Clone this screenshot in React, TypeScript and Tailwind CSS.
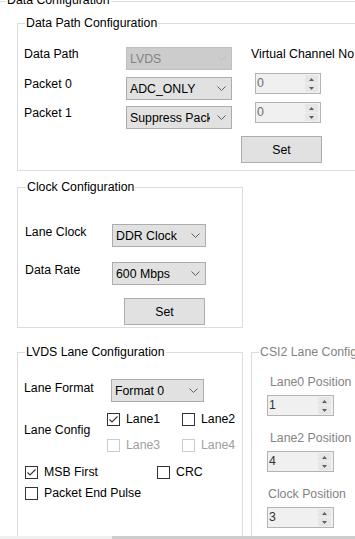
import React from 'react';

const Chevron: React.FC<{ disabled?: boolean }> = ({ disabled }) => (
  <svg width="9" height="5" viewBox="0 0 9 5" className="shrink-0">
    <polyline
      points="0.5,0.5 4.5,4.5 8.5,0.5"
      fill="none"
      stroke={disabled ? '#bdbdbd' : '#606060'}
      strokeWidth="1"
    />
  </svg>
);

const Select: React.FC<{ value: string; className?: string; disabled?: boolean }> = ({
  value,
  className = '',
  disabled,
}) => (
  <div
    className={`flex h-[23px] items-center border pl-[3px] pr-[5px] ${
      disabled ? 'border-[#bfbfbf] bg-[#cccccc] text-[#838383]' : 'border-[#adadad] bg-[#e1e1e1]'
    } ${className}`}
  >
    <span className="mr-[7px] min-w-0 flex-1 overflow-hidden whitespace-nowrap">{value}</span>
    <Chevron disabled={disabled} />
  </div>
);

const SpinBox: React.FC<{ value: string; className?: string; textClass?: string }> = ({
  value,
  className = '',
  textClass = 'text-[#6d6d6d]',
}) => (
  <div className={`flex h-[21px] items-stretch border border-[#b4b4b4] bg-[#f0f0f0] ${className}`}>
    <span className={`flex-1 pl-[1px] pt-[2px] ${textClass}`}>{value}</span>
    <div className="my-[1px] mr-[2px] flex w-[13px] flex-col gap-[1px]">
      <div className="flex flex-1 items-center justify-center bg-[#e6e6e6]">
        <svg width="5" height="3" viewBox="0 0 5 3">
          <polygon points="2.5,0 5,3 0,3" fill="#606060" />
        </svg>
      </div>
      <div className="flex flex-1 items-center justify-center bg-[#e6e6e6]">
        <svg width="5" height="3" viewBox="0 0 5 3">
          <polygon points="0,0 5,0 2.5,3" fill="#606060" />
        </svg>
      </div>
    </div>
  </div>
);

const Button: React.FC<{ label: string; className?: string }> = ({ label, className = '' }) => (
  <div
    className={`flex h-[27px] w-[81px] items-center justify-center border border-[#adadad] bg-[#e1e1e1] ${className}`}
  >
    {label}
  </div>
);

const CheckBox: React.FC<{ label: string; checked?: boolean; disabled?: boolean; className?: string }> = ({
  label,
  checked,
  disabled,
  className = '',
}) => (
  <div className={`flex items-center ${className}`}>
    <div
      className={`flex h-[13px] w-[13px] shrink-0 items-center justify-center border bg-white ${
        disabled ? 'border-[#cccccc]' : 'border-[#333333]'
      }`}
    >
      {checked && (
        <svg width="11" height="11" viewBox="0 0 11 11">
          <polyline points="1.5,5.5 4,8 9.5,2.5" fill="none" stroke="#333333" strokeWidth="1.1" />
        </svg>
      )}
    </div>
    <span className={`ml-[6px] whitespace-nowrap ${disabled ? 'text-[#a0a0a0]' : ''}`}>{label}</span>
  </div>
);

const GroupBox: React.FC<{
  title: string;
  className?: string;
  titleClass?: string;
  children?: React.ReactNode;
}> = ({ title, className = '', titleClass = '', children }) => (
  <div className={`relative border border-[#dcdcdc] ${className}`}>
    <span className={`absolute -top-[8px] left-[7px] whitespace-nowrap bg-white px-[1px] ${titleClass}`}>
      {title}
    </span>
    {children}
  </div>
);

export default function App() {
  return (
    <div className="relative h-[539px] w-[355px] overflow-hidden bg-white font-['Liberation_Sans',Arial,sans-serif] text-[12.3px] leading-[14px] text-black">
      {/* Data Configuration */}
      <div className="relative mt-[1px] w-[460px] border-t border-[#dcdcdc] pl-[17px] pt-[21px]">
        <span className="absolute -top-[9px] left-[6px] bg-white px-[1px]">Data Configuration</span>

        {/* Data Path Configuration */}
        <GroupBox title="Data Path Configuration" className="h-[148px] w-[420px]">
          <div className="flex pl-[6px] pt-[23px]">
            <div className="flex flex-col">
              <div className="flex items-start">
                <span className="w-[102px]">Data Path</span>
                <Select value="LVDS" disabled className="w-[106px]" />
              </div>
              <div className="mt-[7px] flex items-start">
                <span className="w-[102px]">Packet 0</span>
                <Select value="ADC_ONLY" className="w-[106px]" />
              </div>
              <div className="mt-[6px] flex items-start">
                <span className="w-[102px]">Packet 1</span>
                <Select value="Suppress Packet" className="w-[106px]" />
              </div>
            </div>
            <div className="ml-[9px] flex flex-col items-start">
              <span className="ml-[10px] whitespace-nowrap">Virtual Channel No.</span>
              <SpinBox value="0" className="ml-[14px] mt-[12px] w-[66px]" />
              <SpinBox value="0" className="ml-[14px] mt-[8px] w-[66px]" />
              <Button label="Set" className="mt-[13px]" />
            </div>
          </div>
        </GroupBox>

        {/* Clock Configuration */}
        <GroupBox title="Clock Configuration" className="mt-[16px] h-[141px] w-[226px]" titleClass="left-[8px]">
          <div className="flex flex-col pl-[7px] pt-[36px]">
            <div className="flex items-start">
              <span className="mt-[1px] w-[87px]">Lane Clock</span>
              <Select value="DDR Clock" className="w-[94px]" />
            </div>
            <div className="mt-[15px] flex items-start">
              <span className="mt-[1px] w-[87px]">Data Rate</span>
              <Select value="600 Mbps" className="w-[94px]" />
            </div>
            <Button label="Set" className="ml-[99px] mt-[13px]" />
          </div>
        </GroupBox>

        <div className="mt-[24px] flex items-start">
          {/* LVDS Lane Configuration */}
          <GroupBox title="LVDS Lane Configuration" className="h-[220px] w-[226px]">
            <div className="flex flex-col pl-[6px] pt-[26px]">
              <div className="flex items-start">
                <span className="mt-[2px] w-[87px]">Lane Format</span>
                <Select value="Format 0" className="w-[93px]" />
              </div>
              <div className="mt-[10px] flex items-start">
                <span className="mt-[11px] w-[83px]">Lane Config</span>
                <div className="grid grid-cols-[75px_auto] gap-y-[12px]">
                  <CheckBox label="Lane1" checked />
                  <CheckBox label="Lane2" />
                  <CheckBox label="Lane3" disabled />
                  <CheckBox label="Lane4" disabled />
                </div>
              </div>
              <div className="ml-[1px] mt-[13px] flex">
                <CheckBox label="MSB First" checked className="w-[132px]" />
                <CheckBox label="CRC" />
              </div>
              <CheckBox label="Packet End Pulse" className="ml-[1px] mt-[7px]" />
            </div>
          </GroupBox>

          {/* CSI2 Lane Configuration */}
          <GroupBox
            title="CSI2 Lane Configuration"
            className="ml-[8px] h-[220px] w-[200px]"
            titleClass="text-[#838383]"
          >
            <div className="flex flex-col items-start pl-[15px] pt-[22px] text-[#838383]">
              <span className="ml-[3px]">Lane0 Position</span>
              <SpinBox value="1" className="mt-[6px] w-[67px]" textClass="text-[#333333]" />
              <span className="ml-[3px] mt-[15px]">Lane2 Position</span>
              <SpinBox value="4" className="mt-[6px] w-[67px]" textClass="text-[#333333]" />
              <span className="ml-[1px] mt-[15px]">Clock Position</span>
              <SpinBox value="3" className="mt-[6px] w-[67px]" textClass="text-[#333333]" />
            </div>
          </GroupBox>
        </div>
      </div>

      {/* horizontal scrollbar */}
      <div className="absolute inset-x-0 bottom-0 flex h-[3px] bg-[#f0f0f0]">
        <div className="ml-[112px] flex-1 bg-[#cdcdcd]" />
      </div>
    </div>
  );
}
